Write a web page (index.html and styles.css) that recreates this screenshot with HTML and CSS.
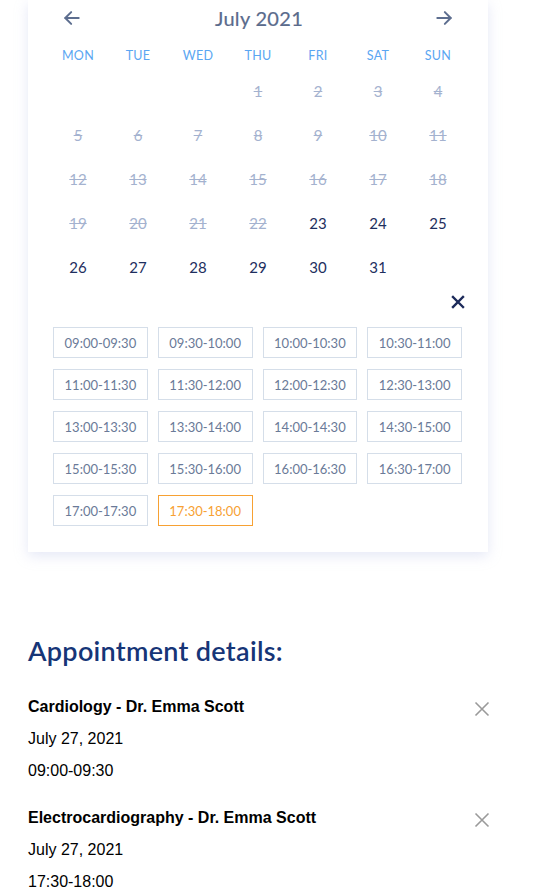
FILE: index.html
```html
<!DOCTYPE html>
<html>
<head>
<meta charset="utf-8">
<link rel="stylesheet" href="styles.css">
</head>
<body>
<div class="page">
  <div class="card">
    <div class="cal-head">
      <button class="nav-btn" aria-label="Previous month">
        <svg width="20" height="20" viewBox="0 0 24 24" fill="none" stroke="currentColor" stroke-width="2.4" stroke-linecap="round" stroke-linejoin="round"><path d="M20 12H4"/><path d="M11 5l-7 7 7 7"/></svg>
      </button>
      <div class="month">July 2021</div>
      <button class="nav-btn" aria-label="Next month">
        <svg width="20" height="20" viewBox="0 0 24 24" fill="none" stroke="currentColor" stroke-width="2.4" stroke-linecap="round" stroke-linejoin="round"><path d="M4 12h16"/><path d="M13 5l7 7-7 7"/></svg>
      </button>
    </div>
    <div class="weekdays">
      <span>MON</span><span>TUE</span><span>WED</span><span>THU</span><span>FRI</span><span>SAT</span><span>SUN</span>
    </div>
    <div class="days">
      <span></span><span></span><span></span>
      <span class="off">1</span><span class="off">2</span><span class="off">3</span><span class="off">4</span>
      <span class="off">5</span><span class="off">6</span><span class="off">7</span><span class="off">8</span><span class="off">9</span><span class="off">10</span><span class="off">11</span>
      <span class="off">12</span><span class="off">13</span><span class="off">14</span><span class="off">15</span><span class="off">16</span><span class="off">17</span><span class="off">18</span>
      <span class="off">19</span><span class="off">20</span><span class="off">21</span><span class="off">22</span><span>23</span><span>24</span><span>25</span>
      <span>26</span><span>27</span><span>28</span><span>29</span><span>30</span><span>31</span><span></span>
    </div>
    <div class="close-row">
      <button class="close-btn" aria-label="Close">
        <svg width="14" height="14" viewBox="0 0 14 14" fill="none" stroke="currentColor" stroke-width="2.4" stroke-linecap="square"><path d="M2 2l10 10M12 2L2 12"/></svg>
      </button>
    </div>
    <div class="slots">
      <div class="slot">09:00-09:30</div>
      <div class="slot">09:30-10:00</div>
      <div class="slot">10:00-10:30</div>
      <div class="slot">10:30-11:00</div>
      <div class="slot">11:00-11:30</div>
      <div class="slot">11:30-12:00</div>
      <div class="slot">12:00-12:30</div>
      <div class="slot">12:30-13:00</div>
      <div class="slot">13:00-13:30</div>
      <div class="slot">13:30-14:00</div>
      <div class="slot">14:00-14:30</div>
      <div class="slot">14:30-15:00</div>
      <div class="slot">15:00-15:30</div>
      <div class="slot">15:30-16:00</div>
      <div class="slot">16:00-16:30</div>
      <div class="slot">16:30-17:00</div>
      <div class="slot">17:00-17:30</div>
      <div class="slot selected">17:30-18:00</div>
    </div>
  </div>

  <section class="details">
    <h2 class="details-title">Appointment details:</h2>
    <div class="appt">
      <div class="appt-info">
        <div class="appt-name">Cardiology - Dr. Emma Scott</div>
        <div class="appt-line">July 27, 2021</div>
        <div class="appt-line">09:00-09:30</div>
      </div>
      <button class="remove-btn" aria-label="Remove">
        <svg width="16" height="16" viewBox="0 0 16 16" fill="none" stroke="currentColor" stroke-width="1.6"><path d="M1.5 1.5l13 13M14.5 1.5l-13 13"/></svg>
      </button>
    </div>
    <div class="appt">
      <div class="appt-info">
        <div class="appt-name">Electrocardiography - Dr. Emma Scott</div>
        <div class="appt-line">July 27, 2021</div>
        <div class="appt-line">17:30-18:00</div>
      </div>
      <button class="remove-btn" aria-label="Remove">
        <svg width="16" height="16" viewBox="0 0 16 16" fill="none" stroke="currentColor" stroke-width="1.6"><path d="M1.5 1.5l13 13M14.5 1.5l-13 13"/></svg>
      </button>
    </div>
  </section>
</div>
</body>
</html>
```

FILE: styles.css
```css
* { box-sizing: border-box; }
html, body { margin: 0; padding: 0; background: #ffffff; }
body { font-family: Lato, "Open Sans", sans-serif; }

.page {
  padding: 0 0 0 28px;
}

.card {
  width: 460px;
  background: #ffffff;
  padding: 0 20px 26px;
  box-shadow: 0 4px 12px rgba(180, 190, 230, 0.35);
}

button {
  background: none;
  border: 0;
  padding: 0;
  cursor: pointer;
  font: inherit;
}

.cal-head {
  height: 36px;
  display: flex;
  align-items: center;
  justify-content: space-between;
  padding: 0 12px 0 12px;
}
.nav-btn {
  color: #5d6e8f;
  width: 24px;
  height: 24px;
  display: flex;
  align-items: center;
  justify-content: center;
}
.month {
  font-size: 20px;
  color: #5a6b8c;
  letter-spacing: 0.3px;
  margin-left: 2px;
  -webkit-text-stroke: 0.2px #5a6b8c;
}

.weekdays {
  display: grid;
  grid-template-columns: repeat(7, 60px);
  height: 33px;
  align-items: center;
  padding-top: 5px;
  font-size: 12.5px;
  color: #5aa6f2;
  text-align: center;
  letter-spacing: 0.3px;
}

.days {
  display: grid;
  grid-template-columns: repeat(7, 60px);
  grid-auto-rows: 44px;
  align-items: center;
  text-align: center;
  font-size: 15px;
  color: #1e2f5e;
}
.days .off {
  color: #a4b2cf;
  text-decoration: line-through;
}

.close-row {
  height: 38px;
  display: flex;
  justify-content: flex-end;
  align-items: flex-start;
  padding: 6px 3px 0 0;
}
.close-btn {
  color: #1c2a5a;
  width: 14px;
  height: 14px;
  display: flex;
}

.slots {
  display: grid;
  grid-template-columns: repeat(4, 1fr);
  grid-auto-rows: 31px;
  column-gap: 10px;
  row-gap: 11px;
  padding: 0 6px 0 5px;
}
.slot {
  border: 1px solid #d5dee9;
  display: flex;
  align-items: center;
  justify-content: center;
  font-size: 13px;
  color: #6a7a98;
}
.slot.selected {
  border-color: #f7a133;
  color: #f7a133;
}

.details {
  width: 462px;
  padding-top: 81px;
}
.details-title {
  margin: 0 0 22px;
  font-family: Lato, "Open Sans", sans-serif;
  font-weight: 600;
  font-size: 27px;
  line-height: 36px;
  color: #163577;
  letter-spacing: 0.3px;
}
.appt {
  display: flex;
  justify-content: space-between;
  align-items: flex-start;
  margin-bottom: 15px;
}
.appt-info {
  font-family: "Liberation Sans", Arial, sans-serif;
  color: #000;
}
.appt-name {
  font-weight: bold;
  font-size: 16px;
  line-height: 32px;
  height: 32px;
}
.appt-line {
  font-size: 16px;
  line-height: 32px;
}
.remove-btn {
  color: #9a9a9a;
  width: 16px;
  height: 16px;
  margin-top: 10px;
  display: flex;
}
```
